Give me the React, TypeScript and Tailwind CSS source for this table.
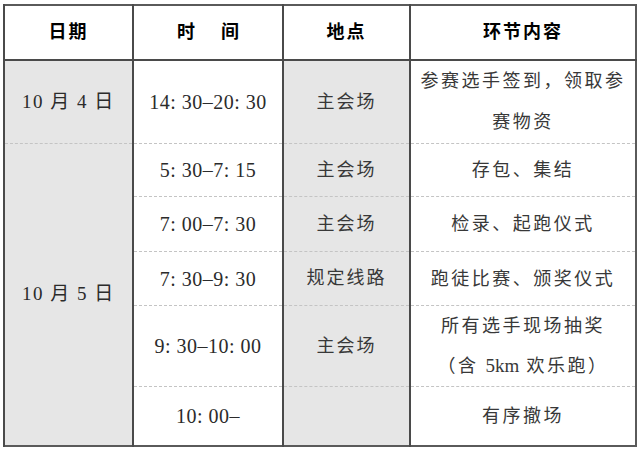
const rows = [
  { time: "5: 30–7: 15", place: "主会场", items: ["存包、集结"], h: "h-[53px]" },
  { time: "7: 00–7: 30", place: "主会场", items: ["检录、起跑仪式"], h: "h-[55px]" },
  { time: "7: 30–9: 30", place: "规定线路", items: ["跑徒比赛、颁奖仪式"], h: "h-[54px]" },
  { time: "9: 30–10: 00", place: "主会场", items: ["所有选手现场抽奖", "km"], h: "h-[80px]" },
  { time: "10: 00–", place: "", items: ["有序撤场"], h: "h-[59px]" },
];

const cell = "text-center align-middle border-l-2 border-l-[#4a4a4a] p-0";

export default function App() {
  return (
    <div className="w-[640px] h-[449px] bg-white pt-[4px] pl-[3px] font-['Liberation_Serif','Noto_Sans_CJK_SC',serif] text-[#2b2b2b]">
      <table className="w-[634px] table-fixed border-collapse border-2 border-[#5a5a5a]">
        <colgroup>
          <col className="w-[129px]" />
          <col className="w-[150px]" />
          <col className="w-[127px]" />
          <col />
        </colgroup>
        <thead>
          <tr className="h-[55px] border-b-2 border-[#4a4a4a]">
            <th className={`${cell} text-[18px] font-bold tracking-[2px] text-black`}>日期</th>
            <th className={`${cell} text-[18px] font-bold text-black`}>
              时<span className="inline-block w-[26px]"></span>间
            </th>
            <th className={`${cell} text-[18px] font-bold tracking-[2px] text-black`}>地点</th>
            <th className={`${cell} text-[18px] font-bold tracking-[2px] text-black`}>环节内容</th>
          </tr>
        </thead>
        <tbody>
          <tr className="h-[83px] border-b border-dashed border-b-[#c4c4c4]">
            <td className={`${cell} bg-[#e6e6e6] text-[19px] tracking-[1.5px]`}>10 月 4 日</td>
            <td className={`${cell} text-[20px] tracking-[0.5px]`}>14: 30–20: 30</td>
            <td className={`${cell} bg-[#e6e6e6] text-[18px] tracking-[2px] text-[#383838]`}>主会场</td>
            <td className={`${cell} text-[18px] tracking-[2.5px] leading-[41px] text-[#383838]`}>
              <div>参赛选手签到，领取参</div>
              <div>赛物资</div>
            </td>
          </tr>
          {rows.map((r, i) => (
            <tr
              key={i}
              className={`${r.h} ${i < rows.length - 1 ? "border-b border-dashed border-b-[#c4c4c4]" : ""}`}
            >
              {i === 0 && (
                <td rowSpan={5} className={`${cell} bg-[#e6e6e6] text-[19px] tracking-[1.5px]`}>
                  10 月 5 日
                </td>
              )}
              <td className={`${cell} text-[20px] tracking-[0.5px]`}>{r.time}</td>
              <td className={`${cell} bg-[#e6e6e6] text-[18px] tracking-[2px] text-[#383838]`}>{r.place}</td>
              <td className={`${cell} text-[18px] tracking-[2.5px] leading-[40px] text-[#383838]`}>
                {r.items.map((t) =>
                  t === "km" ? (
                    <div key={t}>
                      （含 <span className="tracking-normal text-[19px]">5km</span> 欢乐跑）
                    </div>
                  ) : (
                    <div key={t}>{t}</div>
                  )
                )}
              </td>
            </tr>
          ))}
        </tbody>
      </table>
    </div>
  );
}
